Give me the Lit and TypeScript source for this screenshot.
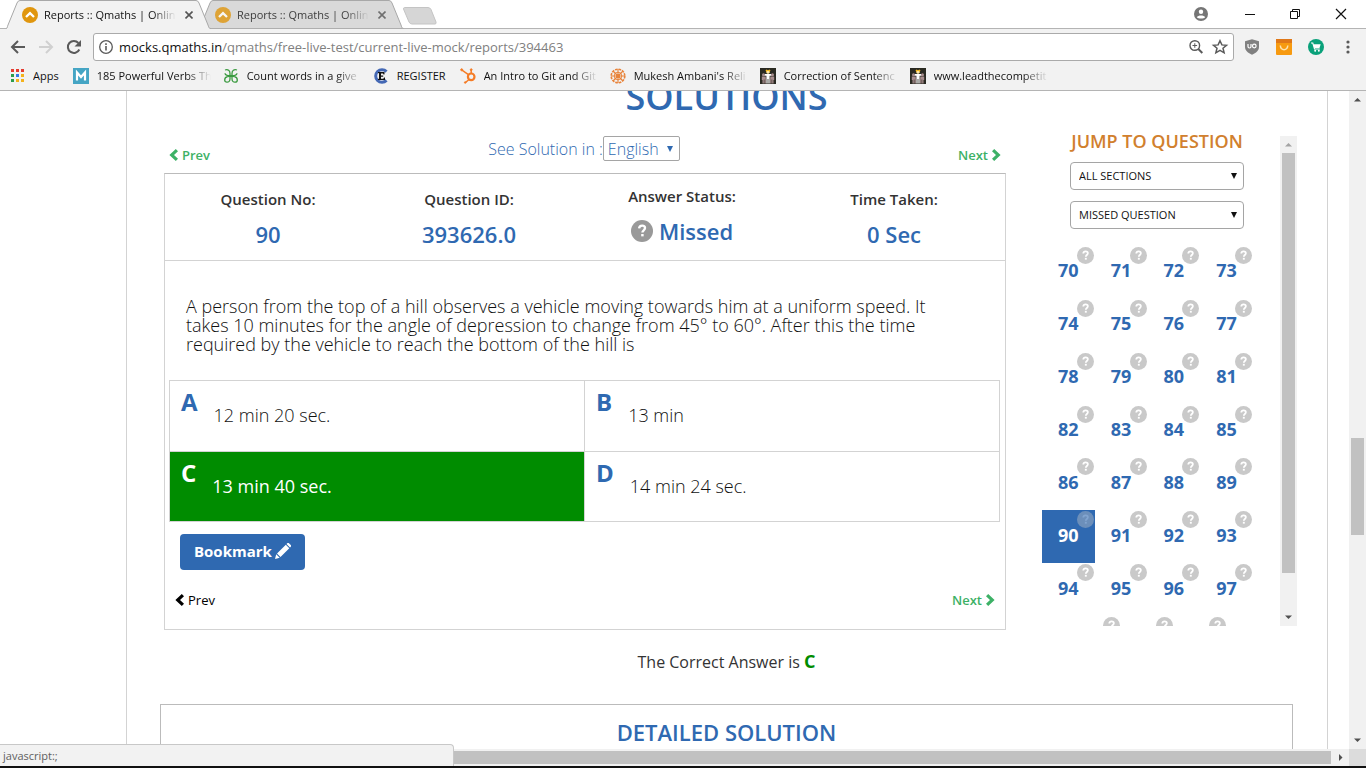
import { LitElement, html, css, svg, nothing } from "lit";
import { customElement, property } from "lit/decorators.js";
import { classMap } from "lit/directives/class-map.js";

const people = html`<svg class="fav" viewBox="0 0 16 16"><rect width="16" height="16" fill="#2a2a22"/><path d="M5.500 2.500l1-1 1.500.8 1.500-.8 1 1-1 1.700h-3z" fill="#f5b81c"/><circle cx="8" cy="4.300" r="1.500" fill="#ffe9a8"/><path d="M4.800 6h6.400l.8 1.800H9.600v7.700H8.400V11h-.8v4.500H6.400V7.800H4z" fill="#fff"/><circle cx="3.500" cy="6.800" r="1.500" fill="#a98e8e"/><circle cx="12.500" cy="6.800" r="1.500" fill="#a98e8e"/><path d="M1.800 8.500h4v7H4.400v-4h-.6v4H2.500v-3.500h-.7zM14.200 8.500h-4v7h1.400v-4h.6v4h1.300v-3.500h.7z" fill="#a98e8e"/></svg>`;

const bookmarks = [
  {
    label: "Apps",
    icon: html`<svg class="fav apps" viewBox="0 0 14 14">
      ${[0, 5, 10].map((y, r) => [0, 5, 10].map((x, c) => svg`<rect x=${x} y=${y} width="3" height="3" fill=${[["#e53b30", "#e53b30", "#e53b30"], ["#2c9c4c", "#3479e8", "#f4b21b"], ["#2c9c4c", "#f4b21b", "#f4b21b"]][r][c]} />`))}
    </svg>`,
  },
  {
    label: "185 Powerful Verbs Th",
    icon: html`<svg class="fav" viewBox="0 0 16 16"><rect width="16" height="16" fill="#45a5c4"/><path d="M4 12.500V4.500l4 4.500 4-4.500v8" fill="none" stroke="#fff" stroke-width="2.200"/></svg>`,
  },
  {
    label: "Count words in a give",
    icon: html`<svg class="fav" viewBox="0 0 16 16" fill="none" stroke="#3a9a3f" stroke-width="1.300"><path d="M2 2c3-1 5 .5 5 3.500v5.200c0 2.500-1.300 3.500-3 3.500-1.500 0-2.300-.9-2.300-2.200C1.700 10 3 9 4.500 8.700l7.500-1.400c1.500-.3 2-1 2-2M14 2c-3-1-5 .5-5 3.500v5.200c0 2.500 1.300 3.500 3 3.500 1.500 0 2.300-.9 2.300-2.200 0-2-1.300-3-2.800-3.300L4 7.300c-1.500-.3-2-1-2-2"/></svg>`,
  },
  {
    label: "REGISTER",
    icon: html`<svg class="fav" viewBox="0 0 16 16"><path d="M13.500 3.600A6.300 6.300 0 1 0 13.500 12.400" fill="none" stroke="#4468b4" stroke-width="3"/><path d="M5 4h6.500v2.500h-1L10 5.500H8v2h2.200v1.300H8v2h2.400l.6-1.300h1V12H5v-1l1-.2V5.200L5 5z" fill="#111"/></svg>`,
  },
  {
    label: "An Intro to Git and Git",
    icon: html`<svg class="fav" viewBox="0 0 16 16" fill="none" stroke="#f57c26"><circle cx="11.200" cy="8.800" r="3.300" stroke-width="2.200"/><path d="M11.200 5.500V2M8.800 6.800L2 2.200M9 11.500l-3.500 3" stroke-width="1.500"/><circle cx="11.200" cy="1.700" r=".9" fill="#f57c26"/><circle cx="1.700" cy="1.800" r="1" fill="#f57c26"/><circle cx="5.200" cy="14.500" r=".8" fill="#f57c26"/></svg>`,
  },
  {
    label: "Mukesh Ambani's Reli",
    icon: html`<svg class="fav" viewBox="0 0 16 16" fill="none" stroke="#e8833a"><circle cx="8" cy="8" r="6.800" stroke-width="1.600" stroke-dasharray="2.600 1"/><circle cx="8" cy="8" r="3.800" stroke-width="1"/><circle cx="8" cy="8" r="1.500" fill="#e8833a"/><path d="M8 1v14M1 8h14M3 3l10 10M13 3L3 13" stroke-width="1.100"/></svg>`,
  },
  { label: "Correction of Sentenc", icon: people },
  { label: "www.leadthecompetit", icon: people },
];

const chevLeft = html`<svg class="chev" viewBox="0 0 9 12"><path d="M6.800 0L9 2.200 5 6l4 3.800L6.800 12 .4 6z" fill="currentColor"/></svg>`;
const chevRight = html`<svg class="chev" viewBox="0 0 9 12"><path d="M2.200 0L0 2.200 4 6 0 9.800 2.200 12 8.600 6z" fill="currentColor"/></svg>`;
const questionMark = html`<svg class="mark" viewBox="0 0 16 16" aria-hidden="true"><circle cx="8" cy="8" r="8" fill="currentColor"/><path d="M5.900 6.100C6 4.700 6.900 4.100 8.100 4.100c1.300 0 2.100.7 2.100 1.800 0 1.600-1.900 1.600-1.900 3.200" fill="none" stroke="#fff" stroke-width="1.700"/><rect x="7.400" y="10.200" width="1.800" height="1.700" fill="#fff"/></svg>`;

@customElement("browser-tab")
class BrowserTab extends LitElement {
  @property({ type: Boolean }) active = false;

  static styles = css`
    :host { display: block; width: 205px; height: 29px; position: relative; flex: none; }
    .shape { position: absolute; inset: 0; width: 205px; height: 29px; }
    .content { position: relative; display: flex; align-items: center; height: 29px; padding: 0 14px 0 16px; box-sizing: border-box; }
    .logo { width: 16px; height: 16px; flex: none; margin-right: 6px; }
    .title { flex: 1; overflow: hidden; white-space: nowrap; line-height: 18px; color: #111; -webkit-mask-image: linear-gradient(to right, #000 82%, transparent); mask-image: linear-gradient(to right, #000 82%, transparent); }
    .close { border: 0; background: none; padding: 0; width: 16px; height: 16px; margin-left: 5px; display: grid; place-items: center; }
    .close svg { width: 8px; height: 8px; }
    .idle { opacity: 0.8; }
  `;

  render() {
    return html`
      <svg class="shape" viewBox="0 0 205 29"><path d="M-1 28.500C2 28.500 1 27 2 25L11 3Q12 .5 14 .5H190Q192 .5 193 3L202 25C203 28 203 28.500 206 28.500V29H-1z" fill=${this.active ? "#f2f2f2" : "#d9d9d9"}/><path d="M0 28.500C2 28 1 27 2 25L11 3Q12 .5 14 .5H190Q192 .5 193 3L202 25C203 28 203 28.500 205 28.500" fill="none" stroke="#a8a8a8"/>${this.active ? nothing : svg`<path d="M9 28.500H205" stroke="#aeaeae"/>`}</svg>
      <div class=${classMap({ content: true, idle: !this.active })}>
        <svg class="logo" viewBox="0 0 16 16"><circle cx="8" cy="8" r="8" fill="#e0960e"/><path d="M4 10l4-3.800L12 10" fill="none" stroke="#fff" stroke-width="2.300"/></svg>
        <span class="title">Reports :: Qmaths | Onlin</span>
        <button class="close" aria-label="Close tab"><svg viewBox="0 0 8 8"><path d="M.5.5l7 7m0-7l-7 7" stroke="#555" stroke-width="1.600"/></svg></button>
      </div>`;
  }
}

@customElement("browser-chrome")
class BrowserChrome extends LitElement {
  static styles = css`
    :host { display: block; background: #f2f2f2; border-bottom: 1px solid #b4b4b4; font-size: 11px; }
    .strip { display: flex; height: 28px; background: #fff; border-bottom: 1px solid #b4b4b4; padding-left: 6px; }
    .front { z-index: 1; }
    .back { margin-left: -12px; }
    .newtab { border: 0; padding: 0; background: none; width: 36px; height: 18px; margin: 7px 0 0 -2px; }
    .newtab svg, .window svg { display: block; }
    .window { margin-left: auto; display: flex; align-items: center; gap: 30px; padding-right: 15px; }
    button { border: 0; padding: 0; background: none; display: grid; place-items: center; flex: none; }
    .toolbar { display: flex; align-items: center; height: 36px; padding: 0 10px; gap: 11px; }
    .address { flex: 1; display: flex; align-items: center; height: 26px; border: 1px solid #aaa; border-radius: 3px; background: #fff; padding: 0 4px; gap: 5px; }
    .url { flex: 1; font-size: 13px; line-height: 20px; color: #808080; white-space: nowrap; }
    .host { color: #111; }
    .extras { display: flex; align-items: center; gap: 16px; margin-left: -1px; }
    .nav { display: flex; gap: 12px; }
    .marks { display: flex; gap: 12px; height: 25px; padding: 0 10px 0 11px; align-items: flex-start; }
    .bookmark { display: flex; align-items: center; gap: 8px; padding-right: 2px; box-sizing: border-box; color: #111; text-decoration: none; height: 21px; flex: none; }
    .bookmark span { overflow: hidden; white-space: nowrap; }
    .long { width: 138px; padding-right: 0; }
    .long span { flex: 1; -webkit-mask-image: linear-gradient(to right, #000 78%, transparent); mask-image: linear-gradient(to right, #000 78%, transparent); }
    .fav { width: 16px; height: 16px; flex: none; }
    .apps { width: 14px; height: 14px; }
  `;

  render() {
    return html`
      <div class="strip">
        <browser-tab class="front" active></browser-tab>
        <browser-tab class="back"></browser-tab>
        <button class="newtab" aria-label="New tab"><svg width="36" height="18" viewBox="0 0 36 18"><path d="M2.500.5H26Q28 .5 29 2.500L34 15Q34.500 17 33 17H10Q8 17 7 15L1.500 2Q1.500.5 2.500.5z" fill="#d6d6d6" stroke="#c4c4c4"/></svg></button>
        <div class="window">
          <button aria-label="Profile"><svg width="20" height="14" viewBox="-3 0 20 14"><circle cx="7" cy="7" r="7" fill="#757575"/><circle cx="7" cy="4.700" r="2.200" fill="#fff"/><path d="M2.800 10.200C4 8 10 8 11.200 10.200 10 12 4 12 2.800 10.200z" fill="#fff"/></svg></button>
          <button aria-label="Minimise"><svg width="18" height="12" viewBox="0 0 18 12"><path d="M4 6.500h10" stroke="#111"/></svg></button>
          <button aria-label="Restore"><svg width="12" height="12" viewBox="0 0 12 12"><path d="M1.500 3.500h7v7h-7zM3.500 3.500v-2h7v7h-2" fill="none" stroke="#111"/></svg></button>
          <button aria-label="Close"><svg width="20" height="12" viewBox="0 0 20 12"><path d="M5 1l10 10M15 1L5 11" stroke="#111" stroke-width="1.200"/></svg></button>
        </div>
      </div>
      <div class="toolbar">
        <div class="nav">
          <button aria-label="Back"><svg width="16" height="16" viewBox="0 0 16 16"><path d="M15 8H2.500M8 2L2 8l6 6" fill="none" stroke="#5a5a5a" stroke-width="2"/></svg></button>
          <button aria-label="Forward"><svg width="16" height="16" viewBox="0 0 16 16"><path d="M1 8h12.500M8 2l6 6-6 6" fill="none" stroke="#d0d0d0" stroke-width="2"/></svg></button>
          <button aria-label="Reload"><svg width="16" height="16" viewBox="0 0 16 16"><path d="M13.300 10.500A6 6 0 1 1 12.400 4" fill="none" stroke="#5a5a5a" stroke-width="2"/><path d="M15 1v6.500H8.500z" fill="#5a5a5a"/></svg></button>
        </div>
        <div class="address">
          <svg width="16" height="16" viewBox="0 0 16 16"><circle cx="8" cy="8" r="6.300" fill="none" stroke="#5a5a5a" stroke-width="1.300"/><path d="M8 7v4.500M8 4.300v1.600" stroke="#5a5a5a" stroke-width="1.600"/></svg>
          <span class="url"><span class="host">mocks.qmaths.in</span>/qmaths/free-live-test/current-live-mock/reports/394463</span>
          <svg width="16" height="16" viewBox="0 0 16 16" fill="none" stroke="#5a5a5a" stroke-width="1.400"><circle cx="6.800" cy="6.500" r="4.800"/><path d="M10.300 10l4 4" stroke-width="1.900"/><path d="M4.500 6.500h4.600M6.800 4.200v4.600" stroke-width="1"/></svg>
          <svg width="20" height="16" viewBox="0 0 20 16"><path d="M11 1.700l1.900 4.200 4.600.4-3.500 3 1.100 4.500L11 11.400l-4.100 2.400L8 9.300l-3.500-3 4.600-.4z" fill="none" stroke="#5a5a5a" stroke-width="1.500"/></svg>
        </div>
        <div class="extras">
          <svg width="16" height="16" viewBox="0 0 16 16"><path d="M8 .3l7 2v5.500c0 4-3 6.200-7 8-4-1.800-7-4-7-8V2.300z" fill="#808080"/><path d="M4 5v2.500q0 1.500 1.500 1.500T7 7.500V5" fill="none" stroke="#fff" stroke-width="1.200"/><circle cx="10.300" cy="7" r="1.800" fill="none" stroke="#fff" stroke-width="1.200"/></svg>
          <svg width="16" height="16" viewBox="0 0 16 16"><rect width="16" height="16" rx="1" fill="#f79a10"/><rect width="16" height="4" fill="#e07818"/><path d="M4.300 6.500c.5 5.500 7 5.500 7.500 0" fill="none" stroke="#fde3b0" stroke-width="1.500"/></svg>
          <svg width="16" height="16" viewBox="0 0 16 16"><circle cx="8" cy="8" r="8" fill="#0aa17a"/><path d="M3 4h1.800l1.700 6h5.300" fill="none" stroke="#fff" stroke-width="1.100"/><path d="M5.300 5.300h7.400l-1.200 3.700H6.300z" fill="#fff"/><circle cx="7.200" cy="11.800" r="1" fill="#fff"/><circle cx="10.800" cy="11.800" r="1" fill="#fff"/></svg>
          <button aria-label="Menu"><svg width="16" height="16" viewBox="0 0 16 16" fill="#5a5a5a"><circle cx="8" cy="3" r="1.600"/><circle cx="8" cy="8" r="1.600"/><circle cx="8" cy="13" r="1.600"/></svg></button>
        </div>
      </div>
      <nav class="marks">
        ${bookmarks.map((b) => html`<a class=${classMap({ bookmark: true, long: b.label.length > 10 })} href="#">${b.icon}<span>${b.label}</span></a>`)}
      </nav>`;
  }
}

@customElement("solution-page")
class SolutionPage extends LitElement {
  static styles = css`
    :host { display: block; color: #333; font-size: 16px; }
    .sheet { display: flow-root; margin: 0 21px 0 126px; border: solid #d3d3d3; border-width: 0 1px; padding: 0 30px 0 33px; min-height: 100%; box-sizing: border-box; }
    h1, h2, p, dl, dd, ul { margin: 0; padding: 0; }
    h1 { margin: -12px 4px 0 0; text-align: center; font-size: 36px; line-height: 36px; font-weight: 600; color: #2f69b1; }
    .columns { display: grid; grid-template-columns: minmax(0, 1fr) 255px; column-gap: 36px; padding-left: 4px; margin-top: 17px; align-items: start; }
    a { text-decoration: none; }
    .step { display: inline-flex; align-items: center; gap: 4px; color: #3db166; font-size: 13px; line-height: 18px; font-weight: 600; }
    .chev { width: 9px; height: 12px; }
    .dark { color: #000; font-weight: 400; }
    .top { display: flex; justify-content: space-between; align-items: flex-start; padding: 4px 5px 0; height: 37px; }
    .top .step { margin-top: 10px; }
    .language { display: flex; align-items: center; color: #2f69b1; font-weight: 300; }
    select { font: inherit; appearance: none; background: #fff; border: 1px solid #a5a5a5; margin: 0; color: inherit; }
    .picker { position: relative; display: block; }
    .picker::after { content: ""; position: absolute; right: 7px; top: 50%; margin-top: -3px; border: solid transparent; border-width: 6px 3px 0; border-top-color: currentColor; }
    .language select { height: 25px; width: 77px; padding: 0 4px; border-radius: 2px; line-height: 22px; }
    .card { border: 1px solid #d3d3d3; border-top-color: #bbb; }
    .facts { display: grid; grid-template-columns: 206fr 196fr 230fr 194fr; padding-right: 14px; height: 87px; box-sizing: border-box; border-bottom: 1px solid #d3d3d3; }
    .fact { display: flex; flex-direction: column; align-items: center; padding-top: 15px; }
    .status { padding-top: 12px; }
    dt { font-size: 15px; line-height: 20px; font-weight: 600; color: #333; }
    .fact dd { margin-top: 10px; font-size: 22px; line-height: 30px; font-weight: 600; color: #2f69b1; display: flex; align-items: center; gap: 6px; }
    .fact .mark { width: 22px; height: 22px; color: #999; }
    .question { padding: 36px 40px 26px 21px; font-size: 18px; line-height: 19px; font-weight: 300; color: #111; }
    .options { display: grid; grid-template-columns: 1fr 1fr; grid-auto-rows: 1fr; height: 142px; box-sizing: border-box; margin: 0 5px 0 4px; border: solid #d3d3d3; border-width: 1px 0 0 1px; list-style: none; }
    .option { display: flex; gap: 16px; padding: 5px 12px 0 11px; border: solid #d3d3d3; border-width: 0 1px 1px 0; font-size: 18px; font-weight: 300; color: #111; }
    .letter { font-size: 24px; line-height: 32px; font-weight: 700; color: #2f69b1; }
    .answer { line-height: 24px; padding-top: 17px; }
    .right { background: #008c00; color: #fff; font-weight: 400; }
    .right .letter { color: #fff; }
    .bookmark { margin: 12px 0 0 15px; height: 36px; padding: 0 14px 2px; border: 0; border-radius: 4px; background: #2f69b1; color: #fff; font: inherit; font-size: 15px; font-weight: 700; display: flex; align-items: center; gap: 3px; }
    .bottom { display: flex; justify-content: space-between; padding: 21px 10px 20px; }
    .jump { display: grid; grid-template-columns: minmax(0, 1fr) 17px; height: 494px; overflow: hidden; }
    .list { overflow: hidden; min-height: 0; }
    .list h2 { font-size: 18px; line-height: 18px; font-weight: 600; color: #d1802e; text-align: center; padding-right: 8px; margin-bottom: 12px; }
    .filter { margin: 0 36px 11px 28px; color: #111; }
    .filter select { width: 100%; height: 28px; border-radius: 4px; padding: 0 8px 2px; font-size: 11px; }
    .numbers { display: grid; grid-template-columns: repeat(4, 1fr); grid-template-rows: repeat(7, 1fr); width: 211px; height: 370px; margin-top: 17px; }
    .rest { display: flex; justify-content: center; width: 211px; height: 53px; }
    .number { position: relative; display: grid; place-items: center; padding-bottom: 4px; font-size: 18px; font-weight: 700; color: #2f69b1; }
    .rest .number { width: 53px; box-sizing: border-box; }
    .number .mark { position: absolute; top: 1px; right: 1px; width: 17px; height: 17px; color: #c9c9c9; }
    .current { background: #2f69b1; color: #fff; }
    .current .mark { opacity: 0.4; }
    .correct { text-align: center; margin: 19px 4px 0 0; line-height: 24px; font-size: 16px; }
    .correct b { font-size: 18px; color: #008c00; }
    .detail { margin: 30px 4px 0 0; border: 1px solid #bbb; height: 300px; padding-top: 12px; text-align: center; }
    .detail h2 { font-size: 22px; line-height: 30px; font-weight: 600; color: #2f69b1; }
    .jump scroll-bar { margin-top: 4px; }
  `;

  private cell(n: number) {
    return html`<a class=${classMap({ number: true, current: n === 90 })} href="#">${n}${questionMark}</a>`;
  }

  private option(letter: string, text: string, right = false) {
    return html`<li class=${classMap({ option: true, right })}><span class="letter">${letter}</span><span class="answer">${text}</span></li>`;
  }

  render() {
    return html`<div class="sheet">
      <h1>SOLUTIONS</h1>
      <div class="columns">
        <section>
          <div class="top">
            <a class="step" href="#">${chevLeft}Prev</a>
            <div class="language"><label for="lang">See Solution in :</label><span class="picker"><select id="lang"><option>English</option></select></span></div>
            <a class="step" href="#">Next${chevRight}</a>
          </div>
          <div class="card">
            <dl class="facts">
              <div class="fact"><dt>Question No:</dt><dd>90</dd></div>
              <div class="fact"><dt>Question ID:</dt><dd>393626.0</dd></div>
              <div class="fact status"><dt>Answer Status:</dt><dd>${questionMark}Missed</dd></div>
              <div class="fact"><dt>Time Taken:</dt><dd>0 Sec</dd></div>
            </dl>
            <p class="question">A person from the top of a hill observes a vehicle moving towards him at a uniform speed. It takes 10 minutes for the angle of depression to change from 45° to 60°. After this the time required by the vehicle to reach the bottom of the hill is</p>
            <ul class="options">
              ${this.option("A", "12 min 20 sec.")}${this.option("B", "13 min")}
              ${this.option("C", "13 min 40 sec.", true)}${this.option("D", "14 min 24 sec.")}
            </ul>
            <button class="bookmark">Bookmark<svg width="16" height="16" viewBox="0 0 16 16" fill="#fff"><path d="M0 16l1.200-4.700 3.500 3.500zM2 10.500L10.800 1.700l3.500 3.500L5.500 14zM11.500 1L12.500 0h1.200L16 2.300v1.200l-1 1z"/></svg></button>
            <div class="bottom"><a class="step dark" href="#">${chevLeft}Prev</a><a class="step" href="#">Next${chevRight}</a></div>
          </div>
        </section>
        <aside class="jump">
          <div class="list">
            <h2>JUMP TO QUESTION</h2>
            <div class="filter picker"><select aria-label="Section"><option>ALL SECTIONS</option></select></div>
            <div class="filter picker"><select aria-label="Question status"><option>MISSED QUESTION</option></select></div>
            <div class="numbers">${Array.from({ length: 28 }, (_, i) => this.cell(70 + i))}</div>
            <div class="rest">${[98, 99, 100].map((n) => this.cell(n))}</div>
          </div>
          <scroll-bar .before=${0} .size=${420} .after=${36} muted></scroll-bar>
        </aside>
      </div>
      <p class="correct">The Correct Answer is <b>C</b></p>
      <div class="detail"><h2>DETAILED SOLUTION</h2></div>
    </div>`;
  }
}

@customElement("scroll-bar")
class ScrollBar extends LitElement {
  @property({ type: Number }) before = 0;
  @property({ type: Number }) size = 1;
  @property({ type: Number }) after = 0;
  @property({ type: Boolean }) muted = false;

  static styles = css`
    :host { display: flex; flex-direction: column; width: 17px; background: #f1f1f1; min-height: 0; }
    .arrow { width: 17px; height: 17px; flex: none; color: #505050; }
    .off { color: #a3a3a3; }
    .thumb { background: #c1c1c1; margin: 0 2px; min-height: 0; }
  `;

  render() {
    return html`<svg class=${classMap({ arrow: true, off: this.muted })} viewBox="0 0 17 17"><path d="M5 10.500h7L8.500 7z" fill="currentColor"/></svg>
      <div style="flex:${this.before} 1 0"></div>
      <div class="thumb" style="flex:${this.size} 1 0"></div>
      <div style="flex:${this.after} 1 0"></div>
      <svg class="arrow" viewBox="0 0 17 17"><path d="M5 6.500h7L8.500 10z" fill="currentColor"/></svg>`;
  }
}

@customElement("app-root")
class AppRoot extends LitElement {
  static styles = css`
    :host { display: flex; flex-direction: column; height: 100vh; overflow: hidden; background: #fff; font-family: "Open Sans", "Noto Sans", sans-serif; }
    .view { flex: 1; min-height: 0; display: grid; grid-template: minmax(0, 1fr) 17px / minmax(0, 1fr) 17px; position: relative; border-bottom: 2px solid #111; }
    .page { overflow: hidden; }
    .across { display: flex; background: #f1f1f1; }
    .thumb { flex: 1; background: #c1c1c1; margin: 2px 1px 2px 0; }
    .corner { background: #dcdcdc; }
    .hint { position: absolute; left: 0; bottom: 0; width: 454px; height: 22px; padding-left: 3px; box-sizing: border-box; background: #f2f2f2; border: solid #c8c8c8; border-width: 1px 1px 0 0; border-radius: 0 4px 0 0; font-size: 11px; line-height: 22px; color: #606060; }
  `;

  render() {
    return html`<browser-chrome></browser-chrome>
      <main class="view">
        <solution-page class="page"></solution-page>
        <scroll-bar .before=${330} .size=${97} .after=${197}></scroll-bar>
        <div class="across"><div class="thumb"></div><svg width="17" height="17" viewBox="0 0 17 17"><path d="M7 5v7l3.500-3.500z" fill="#505050"/></svg></div>
        <div class="corner"></div>
        <div class="hint">javascript:;</div>
      </main>`;
  }
}
